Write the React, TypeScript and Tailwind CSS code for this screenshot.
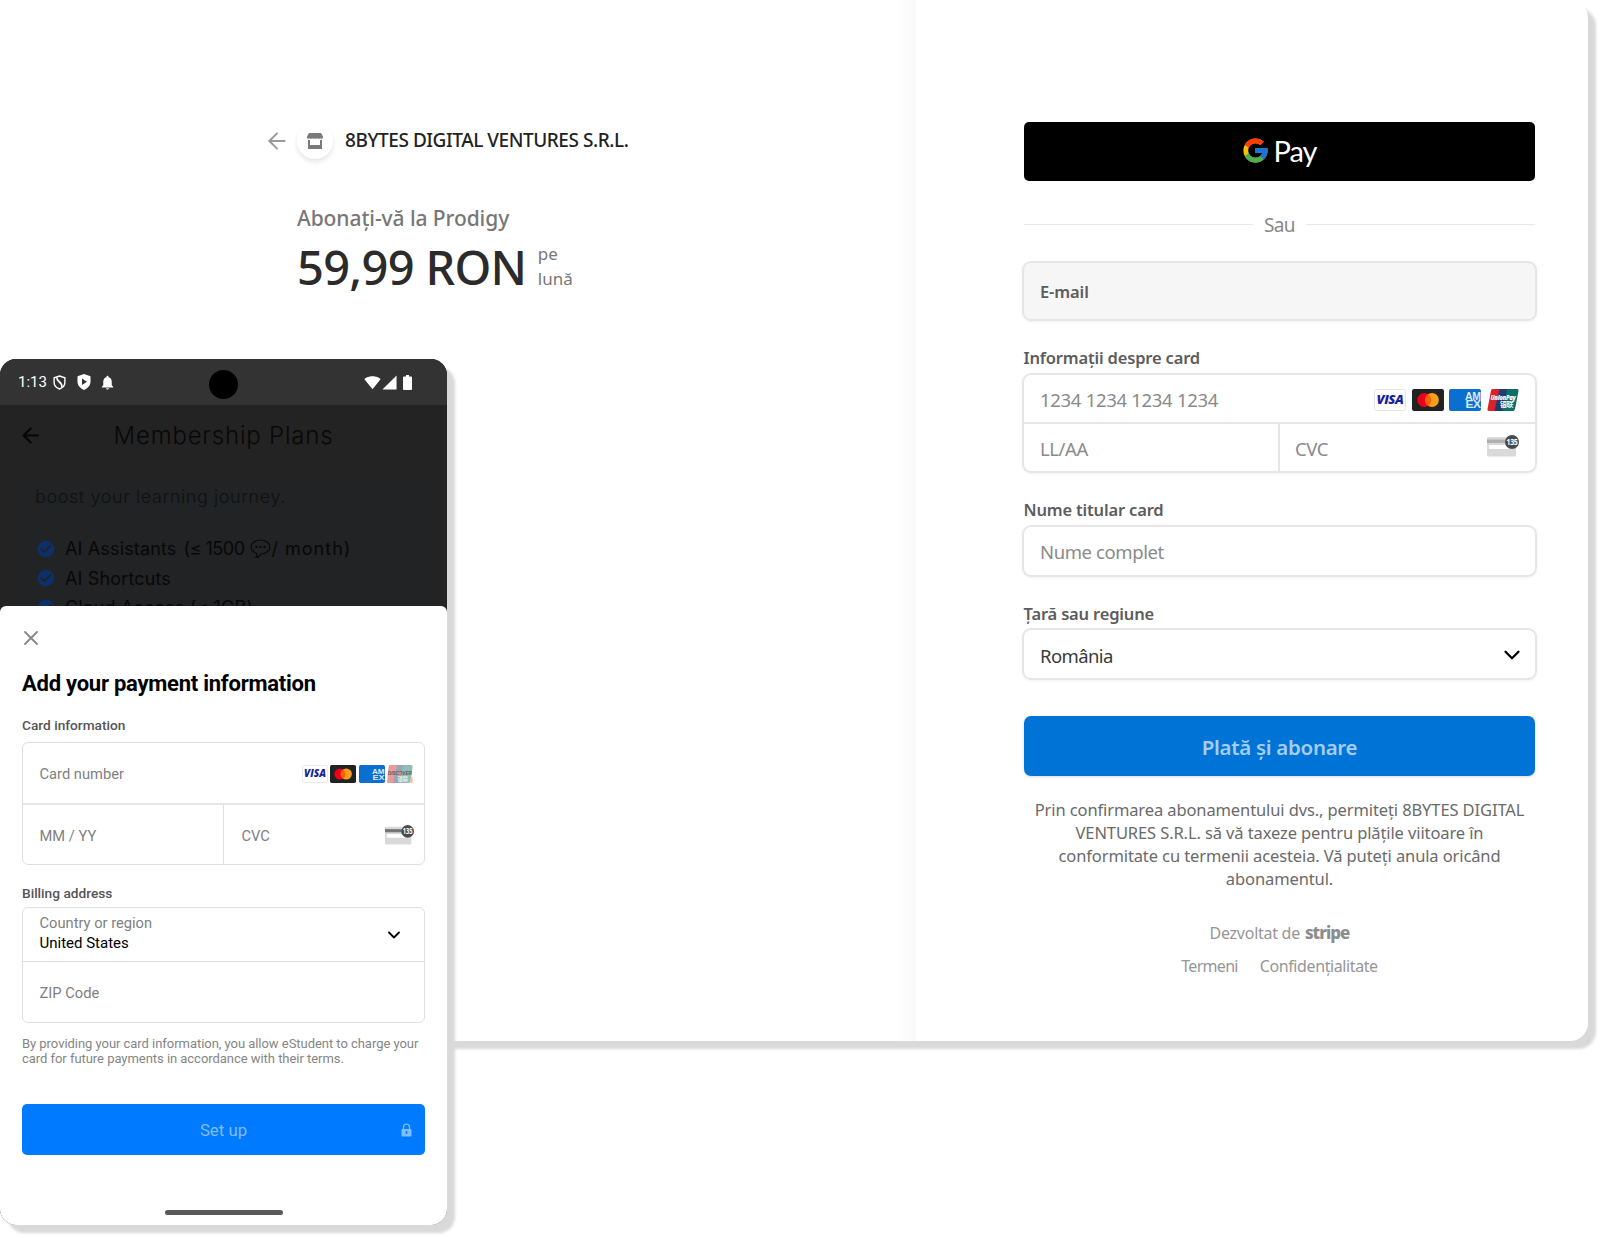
import { ArrowLeft, ChevronDown, X } from 'lucide-react'
import { FcGoogle } from 'react-icons/fc'
import { MdArrowBack, MdCheckCircle, MdNotifications, MdSignalCellular4Bar, MdSignalWifi4Bar } from 'react-icons/md'

const features = ['AI Assistants', 'AI Shortcuts', 'Cloud Access (≤ 1GB)']

const VisaLogo = ({ className }: { className: string }) => (
  <svg viewBox="0 0 32 22" className={className}>
    <rect x="0.5" y="0.5" width="31" height="21" rx="2" fill="#fff" stroke="#e4e4e8" />
    <text x="2.5" y="15.3" textLength="27" lengthAdjust="spacingAndGlyphs" fontFamily="Open Sans" fontSize="12" fontWeight="800" fontStyle="italic" fill="#1a1f9c">
      VISA
    </text>
  </svg>
)

const MastercardLogo = ({ className }: { className: string }) => (
  <svg viewBox="0 0 32 22" className={className}>
    <rect width="32" height="22" rx="2" fill="#222" />
    <circle cx="12.2" cy="11" r="6.9" fill="#eb001b" />
    <circle cx="20" cy="11" r="6.9" fill="#f79e1b" />
    <path d="M16.1 5.3a6.9 6.9 0 0 1 0 11.4a6.9 6.9 0 0 1 0-11.4z" fill="#ff5f00" />
  </svg>
)

const AmexLogo = ({ className }: { className: string }) => (
  <svg viewBox="0 0 32 22" className={className}>
    <rect width="32" height="22" rx="2" fill="#0b6fd2" />
    <g fontFamily="Liberation Sans" fontSize="10" fontWeight="700" fill="#dcebfa">
      <text x="16" y="10.8" textLength="15.5" lengthAdjust="spacingAndGlyphs">AM</text>
      <text x="16.5" y="18.5" textLength="15" lengthAdjust="spacingAndGlyphs">EX</text>
    </g>
  </svg>
)

const UnionPayLogo = ({ className }: { className: string }) => (
  <svg viewBox="0 0 32 22" className={className}>
    <path d="M5.5 0h9L9.5 22H2Q0 22 .5 20L4 1.5Q4.3 0 5.5 0z" fill="#d8232a" />
    <path d="M12.5 0h9L16.5 22h-9z" fill="#1f3c70" />
    <path d="M20 0h10q2 0 1.5 2L28 20q-.4 2-2.4 2H15z" fill="#0c6e67" />
    <text x="3.5" y="11" textLength="25" lengthAdjust="spacingAndGlyphs" fontFamily="Open Sans" fontSize="7" fontWeight="800" fontStyle="italic" fill="#fff">
      UnionPay
    </text>
    <text x="13" y="18" textLength="13" lengthAdjust="spacingAndGlyphs" fontFamily="Noto Sans CJK SC" fontSize="6.5" fontWeight="700" fill="#fff">
      银联
    </text>
  </svg>
)

// UnionPay fading out into Discover
const RotatingLogo = ({ className }: { className: string }) => (
  <svg viewBox="0 0 32 22" className={className}>
    <path d="M3.5 0h11L9.5 22H1Q0 22 .2 20L2 1.5Q2.3 0 3.5 0z" fill="#e89a9c" />
    <path d="M12.5 0h9L16.5 22h-9z" fill="#98a5b8" />
    <path d="M20 0h10q2 0 1.5 2L29 20q-.4 2-2.4 2H15z" fill="#90bdb8" />
    <path d="M29.5 15l-1.5 7h2q1.5 0 1.5-2v-6z" fill="#f6c3a0" />
    <text x="13" y="19.5" textLength="13" lengthAdjust="spacingAndGlyphs" fontFamily="Noto Sans CJK SC" fontSize="7" fontWeight="700" fill="#e3efed">
      银联
    </text>
    <text x="1" y="12.5" textLength="29.5" lengthAdjust="spacingAndGlyphs" fontFamily="Liberation Sans" fontSize="5.5" fontWeight="700" fontStyle="italic" fill="#5c5c5c">
      DISCOVER
    </text>
    <circle cx="15.8" cy="10.5" r="1.8" fill="#ef8a55" />
  </svg>
)

const CvcIcon = ({ className, stripe }: { className: string; stripe: string }) => (
  <svg viewBox="0 0 32 22" className={className}>
    <rect y="2" width="29" height="19.5" rx="1.5" fill="#d9d9d9" />
    <rect y="4.5" width="29" height="3.5" fill={stripe} />
    <rect x="2" y="10" width="25" height="4" fill="#fff" />
    <circle cx="25" cy="7" r="7" fill="#4a4a4a" />
    <text x="19.5" y="10.3" textLength="11" lengthAdjust="spacingAndGlyphs" fontFamily="Open Sans" fontSize="9" fontWeight="700" fill="#fff">
      135
    </text>
  </svg>
)

const Label = ({ children }: { children: string }) => (
  <div className="mt-[25px] ml-[1.5px] h-6 shrink-0 text-[16.5px] leading-6 font-semibold tracking-[-0.17px] text-[#5c5c5c]">{children}</div>
)

function Checkout() {
  return (
    <div className="flex h-[1041px] w-[1588px] rounded-r-[18px] bg-white font-['Noto_Sans',sans-serif] shadow-[8px_8px_3px_#d9d9d9]">
      <div className="w-[898px] pt-[122.5px] pl-[264px]">
        <div className="flex h-9 items-center">
          <ArrowLeft className="size-[26px] text-[#999]" strokeWidth={1.8} />
          <div className="ml-[7px] flex size-9 items-center justify-center rounded-full bg-white shadow-[0_3px_5px_rgba(0,0,0,0.1)]">
            <svg viewBox="0 0 16 16" className="size-4" fill="#7a7a7a">
              <path d="M2 0h12l2 3.5v1.2Q15 6.5 13.3 5.2 12 6.5 10.6 5.2 9.3 6.5 8 5.2 6.7 6.5 5.4 5.2 4 6.5 2.7 5.2 1 6.5 0 4.7V3.5z" />
              <path d="M1 7h2v5h10V7h2v9H1z" />
            </svg>
          </div>
          <div className="ml-[12px] text-[19px] font-medium tracking-[-0.45px] text-[#222]">8BYTES DIGITAL VENTURES S.R.L.</div>
        </div>

        <div className="mt-[43px] ml-[33px]">
          <div className="h-8 text-[21px] leading-8 font-medium tracking-[-0.08px] text-[#777]">Abonați-vă la Prodigy</div>
          <div className="mt-[4px] flex h-[60px] items-center">
            <div className="text-[47px] font-medium tracking-[-0.7px] text-[#2b2b2b]">59,99 RON</div>
            <div className="ml-[11.5px] pb-[2px] text-[17px] leading-[24.5px] text-[#777]">
              pe
              <br />
              lună
            </div>
          </div>
        </div>
      </div>

      <div className="w-[18px] bg-linear-to-r from-white to-[#f9f9f9]" />

      <div className="flex flex-1 flex-col pt-[122px] pr-[51px] pl-[106px]">
        <button className="mx-[2px] flex h-[59px] shrink-0 items-center justify-center rounded-[5px] bg-black pr-[2px] pb-[2px]">
          <FcGoogle className="size-[29px]" />
          <span className="ml-[4px] font-['Lato'] text-[29px] leading-9 tracking-[-1px] text-white">Pay</span>
        </button>

        <div className="mx-[2px] mt-[31px] flex h-[25px] items-center gap-[11px]">
          <div className="h-px flex-1 bg-[#e8e8e8]" />
          <span className="pt-[2px] text-[19px] tracking-[-0.6px] text-[#888]">Sau</span>
          <div className="h-px flex-1 bg-[#e8e8e8]" />
        </div>

        <div className="mt-6 flex h-[60px] items-center rounded-[9px] border-2 border-[#e6e6e6] bg-[#f6f6f6] px-4 pt-[3px] text-[16.5px] font-semibold tracking-[-0.1px] text-[#5c5c5c] shadow-[0_1px_3px_rgba(0,0,0,0.06)]">
          E-mail
        </div>

        <Label>Informații despre card</Label>
        <div className="mt-[3px] flex h-[100px] flex-col rounded-[9px] border-2 border-[#e6e6e6] text-[18.5px] tracking-[-0.4px] text-[#8a8a8a] shadow-[0_1px_3px_rgba(0,0,0,0.06)]">
          <div className="flex h-[49px] items-center justify-between border-b-2 border-[#e6e6e6] pr-[16.5px] pl-4">
            <span className="pt-[3px] tracking-[-0.3px]">1234 1234 1234 1234</span>
            <div className="flex gap-[5.5px] pt-[3px]">
              <VisaLogo className="h-[22px] w-8" />
              <MastercardLogo className="h-[22px] w-8" />
              <AmexLogo className="h-[22px] w-8" />
              <UnionPayLogo className="h-[22px] w-8" />
            </div>
          </div>
          <div className="flex flex-1">
            <div className="flex w-[256px] items-center border-r-2 border-[#e6e6e6] pt-[2px] pl-4">LL/AA</div>
            <div className="flex flex-1 items-center justify-between pt-[2px] pr-4 pl-[15px]">
              CVC
              <CvcIcon className="mb-[5px] h-[22px] w-8" stripe="#b0b0b0" />
            </div>
          </div>
        </div>

        <Label>Nume titular card</Label>
        <div className="mt-[3px] flex h-[52px] items-center rounded-[9px] border-2 border-[#e6e6e6] px-4 pt-[2px] text-[18.5px] tracking-[-0.4px] text-[#8a8a8a] shadow-[0_1px_3px_rgba(0,0,0,0.06)]">
          Nume complet
        </div>

        <Label>Țară sau regiune</Label>
        <div className="mt-[2px] flex h-[52px] items-center justify-between rounded-[9px] border-2 border-[#e6e6e6] pt-[3px] pr-[10.5px] pl-4 text-[18.5px] tracking-[-0.6px] text-[#3a3a3a] shadow-[0_1px_3px_rgba(0,0,0,0.06)]">
          România
          <ChevronDown className="mb-[2px] size-[26px] text-black" strokeWidth={2.1} />
        </div>

        <button className="mx-[2px] mt-9 h-[60px] shrink-0 rounded-[7px] bg-[#0074d6] pt-[3px] text-[20.5px] font-semibold tracking-[-0.3px] text-[#a5cdf2] shadow-[0_1px_3px_rgba(0,0,0,0.15)]">
          Plată și abonare
        </button>

        <p className="mt-[22px] text-center text-[16.5px] leading-[23px] tracking-[-0.11px] text-[#6a6a6a]">
          Prin confirmarea abonamentului dvs., permiteți 8BYTES DIGITAL
          <br />
          VENTURES S.R.L. să vă taxeze pentru plățile viitoare în
          <br />
          conformitate cu termenii acesteia. Vă puteți anula oricând
          <br />
          abonamentul.
        </p>

        <div className="mt-[31px] flex h-6 items-center justify-center gap-[5px] text-base tracking-[-0.27px] text-[#969696]">
          Dezvoltat de <span className="text-[17px] font-extrabold tracking-[-1px] text-[#8c8c8c]">stripe</span>
        </div>
        <div className="mt-[9px] flex h-6 items-center justify-center gap-[22px] text-base tracking-[-0.4px] text-[#969696]">
          <span className="tracking-[-0.7px]">Termeni</span>
          <span>Confidențialitate</span>
        </div>
      </div>
    </div>
  )
}

function StatusBar() {
  return (
    <div className="relative flex h-[46px] shrink-0 items-center bg-[#333] pl-[18px] text-white">
      <span className="text-[15px]">1:13</span>
      <svg viewBox="0 0 14 16" className="ml-[6px] h-[15px] w-[13px]" fill="none" stroke="#fff" strokeWidth="1.5">
        <path d="M7 1l5.8 2v5c0 3-2.3 5.6-5.8 7C3.500 13.600 1.200 11 1.200 8V3z" />
        <path d="M4.200 2.500c-.8 5 6.300 4.500 5.300 10.500" strokeWidth="1.800" />
      </svg>
      <svg viewBox="0 0 14 16" className="ml-[11px] h-[16px] w-[14px]" fill="#fff">
        <path fillRule="evenodd" d="M7 0l6.500 2.300v5.500c0 3.500-2.600 6.600-6.500 8.200C3.100 14.400.5 11.300.5 7.800V2.300zM5 4.500v6.500l5-3.200z" />
      </svg>
      <MdNotifications className="ml-[8px] size-[17px]" />
      <div className="absolute top-[11px] left-[209px] size-[29px] rounded-full bg-black" />
      <div className="ml-auto flex items-center pr-[35px]">
        <MdSignalWifi4Bar className="size-[17px]" />
        <MdSignalCellular4Bar className="size-[17px]" />
        <svg viewBox="0 0 9 15" className="ml-[5px] h-[15px] w-[9px]" fill="#fff">
          <path d="M3 0h3v1.500h2q1 0 1 1V14q0 1-1 1H1q-1 0-1-1V2.500q0-1 1-1h2z" />
        </svg>
      </div>
    </div>
  )
}

function Phone() {
  return (
    <div className="absolute top-[359px] left-0 rounded-[16px] shadow-[8px_8px_3px_#d9d9d9]">
      <div className="flex h-[866px] w-[447px] flex-col overflow-hidden rounded-[16px] bg-[#232323] font-['Roboto',sans-serif]">
        <StatusBar />
        <div className="h-[201px] overflow-hidden font-['Inter',sans-serif] text-[#080808]">
          <div className="relative flex h-[60px] items-center justify-center">
            <MdArrowBack className="absolute left-[18px] size-[25px] text-[#060606]" />
            <span className="pt-[2px] text-[24px] font-light tracking-[0.8px]">Membership Plans</span>
          </div>
          <div className="mx-[17px] mt-[17px] h-40 bg-[#212324] pl-[18px] text-[18px]">
            <div className="h-[30px] leading-[30px] font-light tracking-[0.6px] text-[#0e1113]">boost your learning journey.</div>
            <div className="mt-[22px]">
              {features.map((feature, i) => (
                <div key={feature} className="flex h-[29.5px] items-center">
                  <MdCheckCircle className="ml-px size-5 text-[#0e3068]" />
                  <span className="ml-[9px] tracking-[0.15px]">{feature}</span>
                  {i === 0 && (
                    <>
                      <span className="ml-[7px] tracking-[-0.5px]">(≤ 1500</span>
                      <svg viewBox="0 0 21 20" className="ml-[5px] size-[21px]" fill="none" stroke="currentColor" strokeWidth="1.1">
                        <path d="M10.500 1.500c5.300 0 9.300 3 9.300 7s-4 7-9.300 7q-1 3-4.700 3.500 1.500-2 .8-4.200C3 13.700 1.200 11.300 1.200 8.500c0-4 4-7 9.300-7z" />
                        <path d="M5.500 8.500h2M9.500 8.500h2M13.500 8.500h2" strokeWidth="1.8" />
                      </svg>
                      <span className="ml-px tracking-[1px]">/ month)</span>
                    </>
                  )}
                </div>
              ))}
            </div>
          </div>
        </div>

        <div className="flex flex-1 flex-col rounded-t-[6px] bg-white px-[22px] pt-[20px]">
          <X className="-ml-[3.5px] size-6 shrink-0 text-[#8a8a8a]" strokeWidth={1.9} />
          <h2 className="mt-[21px] h-[26px] text-[22px] leading-[26px] font-bold tracking-[-0.25px] text-black">Add your payment information</h2>

          <div className="mt-[18px] h-5 text-[13.7px] leading-5 font-medium text-[#555]">Card information</div>
          <div className="mt-[7px] flex h-[123px] flex-col rounded-[6px] border border-[#dfdfdf] text-[14.7px] text-[#7f7f7f]">
            <div className="flex h-[62px] items-center justify-between border-b-2 border-[#e6e6e6] pr-[11px] pl-[16.5px]">
              <span className="pt-[3px]">Card number</span>
              <div className="flex gap-[2.3px] pt-[2px]">
                <VisaLogo className="h-[18px] w-[26px]" />
                <MastercardLogo className="h-[18px] w-[26px]" />
                <AmexLogo className="h-[18px] w-[26px]" />
                <RotatingLogo className="h-[18px] w-[26px]" />
              </div>
            </div>
            <div className="flex flex-1">
              <div className="flex w-[201px] items-center border-r border-[#dfdfdf] pt-[3px] pl-[16.5px]">MM / YY</div>
              <div className="flex flex-1 items-center justify-between pt-[3px] pr-[10px] pl-[17.5px]">
                CVC
                <CvcIcon className="mb-[2px] h-[20px] w-[29px]" stripe="#757575" />
              </div>
            </div>
          </div>

          <div className="mt-[18px] h-5 text-[13.7px] leading-5 font-medium text-[#555]">Billing address</div>
          <div className="mt-[4px] flex h-[116px] flex-col rounded-[6px] border border-[#dfdfdf] text-[14.7px] text-[#7f7f7f]">
            <div className="flex h-[54px] items-center justify-between border-b border-[#dfdfdf] pr-[20px] pl-[16.5px]">
              <div className="pb-[4px] leading-5">
                <div>Country or region</div>
                <div className="text-[15px] text-black">United States</div>
              </div>
              <ChevronDown className="mt-px size-[20px] text-black" strokeWidth={2.2} />
            </div>
            <div className="flex flex-1 items-center pt-[3px] pl-[16.5px]">ZIP Code</div>
          </div>

          <p className="mt-[12.5px] text-[13px] leading-[15.5px] tracking-[-0.04px] whitespace-nowrap text-[#858585]">
            By providing your card information, you allow eStudent to charge your
            <br />
            card for future payments in accordance with their terms.
          </p>

          <button className="relative mt-[37.5px] h-[51px] shrink-0 rounded-[5px] bg-[#007aff] pt-[2px] text-[16.8px] text-[#80bdff]">
            Set up
            <svg viewBox="0 0 11 14" className="absolute top-[19px] right-[13px] h-[14px] w-[11px]">
              <path d="M2.500 6V4.200a3 3 0 0 1 6 0V6" fill="none" stroke="#80bdff" strokeWidth="1.3" />
              <rect x="0.5" y="6" width="10" height="7.5" rx="1" fill="#80bdff" />
              <path d="M5.500 8v3" stroke="#007aff" strokeWidth="1.6" />
            </svg>
          </button>
          <div className="mx-auto mt-[55px] h-[5px] w-[118px] rounded-full bg-[#5a5a5a]" />
        </div>
      </div>
    </div>
  )
}

export default function App() {
  return (
    <div className="relative h-[1238px] w-[1600px] overflow-hidden bg-white">
      <Checkout />
      <Phone />
    </div>
  )
}
